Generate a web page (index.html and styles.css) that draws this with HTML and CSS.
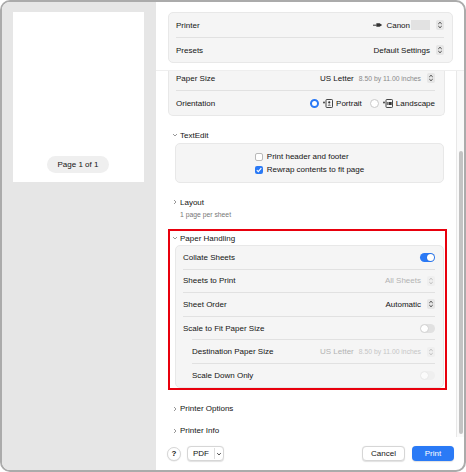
FILE: index.html
```html
<!DOCTYPE html>
<html lang="en">
<head>
  <meta charset="UTF-8">
  <meta name="viewport" content="width=device-width, initial-scale=1.0">
  <title>Print</title>
  <link rel="stylesheet" href="styles.css">
</head>
<body>
  <div class="window">
    <aside class="sidebar">
      <div class="preview">
        <span class="page-label">Page 1 of 1</span>
      </div>
    </aside>

    <main class="main">
      <div class="header">
        <div class="panel">
          <div class="row">
            <span>Printer</span>
            <span class="value">
              <svg class="printer-icon" width="10" height="6" viewBox="0 0 10 6"><path d="M0 3.2h3.6" stroke="#333" stroke-width="1"/><path d="M3.4 1.2h3.2l2.6 1.8-2.6 1.8H3.4z" fill="#333"/></svg>
              <span>Canon<span class="redacted"></span></span>
              <svg class="stepper" width="8" height="10" viewBox="0 0 8 10"><rect x="0" y="0" width="8" height="10" rx="2" fill="#e6e6e6"/><path d="M2.3 3.9L4 2.3l1.7 1.6M2.3 6.1L4 7.7l1.7-1.6" fill="none" stroke="#333" stroke-width="0.9"/></svg>
            </span>
          </div>
          <div class="row">
            <span>Presets</span>
            <span class="value">
              <span>Default Settings</span>
              <svg class="stepper" width="8" height="10" viewBox="0 0 8 10"><rect x="0" y="0" width="8" height="10" rx="2" fill="#e6e6e6"/><path d="M2.3 3.9L4 2.3l1.7 1.6M2.3 6.1L4 7.7l1.7-1.6" fill="none" stroke="#333" stroke-width="0.9"/></svg>
            </span>
          </div>
        </div>
      </div>

      <div class="scroll">
        <div class="content">
          <div class="panel cut">
            <div class="row">
              <span>Paper Size</span>
              <span class="value">
                <span>US Letter</span>
                <span class="hint">8.50 by 11.00 inches</span>
                <svg class="stepper" width="8" height="10" viewBox="0 0 8 10"><rect x="0" y="0" width="8" height="10" rx="2" fill="#e6e6e6"/><path d="M2.3 3.9L4 2.3l1.7 1.6M2.3 6.1L4 7.7l1.7-1.6" fill="none" stroke="#333" stroke-width="0.9"/></svg>
              </span>
            </div>
            <div class="row">
              <span>Orientation</span>
              <span class="value radios">
                <span class="radio on"></span>
                <svg width="10" height="9" viewBox="0 0 10 9"><circle cx="1" cy="3.5" r="0.9" fill="#333"/><rect x="3" y="0.5" width="6.5" height="8" rx="0.8" fill="none" stroke="#333" stroke-width="0.9"/><circle cx="6.25" cy="3.4" r="1.1" fill="#333"/><path d="M4.6 6.6q1.65-2 3.3 0z" fill="#333"/></svg>
                <span>Portrait</span>
                <span class="radio"></span>
                <svg width="10" height="9" viewBox="0 0 10 9"><circle cx="1" cy="3.5" r="0.9" fill="#333"/><rect x="3" y="0.5" width="6.5" height="8" rx="0.8" fill="none" stroke="#333" stroke-width="0.9"/><rect x="5.5" y="3" width="3.2" height="3" fill="#333"/><path d="M4.3 3v3" stroke="#333" stroke-width="0.8"/></svg>
                <span>Landscape</span>
              </span>
            </div>
          </div>

          <section class="group">
            <div class="disclosure">
              <svg width="6" height="6" viewBox="0 0 6 6"><path d="M1 2l2 2 2-2" fill="none" stroke="#8c8c8c" stroke-width="0.9"/></svg>
              <span>TextEdit</span>
            </div>
            <div class="panel inset checks">
              <div class="check-list">
                <label class="check"><span class="box"></span>Print header and footer</label>
                <label class="check"><span class="box on"><svg width="8" height="8" viewBox="0 0 8 8"><path d="M1.8 4.2l1.5 1.5 3-3.6" fill="none" stroke="#fff" stroke-width="1.1"/></svg></span>Rewrap contents to fit page</label>
              </div>
            </div>
          </section>

          <section class="group">
            <div class="disclosure">
              <svg width="6" height="6" viewBox="0 0 6 6"><path d="M2 1l2 2-2 2" fill="none" stroke="#8c8c8c" stroke-width="0.9"/></svg>
              <span>Layout</span>
            </div>
            <div class="sub">1 page per sheet</div>
          </section>

          <section class="group highlight">
            <div class="disclosure">
              <svg width="6" height="6" viewBox="0 0 6 6"><path d="M1 2l2 2 2-2" fill="none" stroke="#8c8c8c" stroke-width="0.9"/></svg>
              <span>Paper Handling</span>
            </div>
            <div class="panel inset list">
              <div class="row">
                <span>Collate Sheets</span>
                <span class="toggle on"><span class="knob"></span></span>
              </div>
              <div class="row">
                <span>Sheets to Print</span>
                <span class="value">
                  <span class="muted">All Sheets</span>
                  <svg class="stepper" width="8" height="10" viewBox="0 0 8 10"><rect x="0" y="0" width="8" height="10" rx="2" fill="#efefef"/><path d="M2.3 3.9L4 2.3l1.7 1.6M2.3 6.1L4 7.7l1.7-1.6" fill="none" stroke="#b5b5b5" stroke-width="0.9"/></svg>
                </span>
              </div>
              <div class="row">
                <span>Sheet Order</span>
                <span class="value">
                  <span>Automatic</span>
                  <svg class="stepper" width="8" height="10" viewBox="0 0 8 10"><rect x="0" y="0" width="8" height="10" rx="2" fill="#e6e6e6"/><path d="M2.3 3.9L4 2.3l1.7 1.6M2.3 6.1L4 7.7l1.7-1.6" fill="none" stroke="#333" stroke-width="0.9"/></svg>
                </span>
              </div>
              <div class="row">
                <span>Scale to Fit Paper Size</span>
                <span class="toggle"><span class="knob"></span></span>
              </div>
              <div class="row indent">
                <span>Destination Paper Size</span>
                <span class="value">
                  <span class="muted">US Letter</span>
                  <span class="hint muted-hint">8.50 by 11.00 inches</span>
                  <svg class="stepper" width="8" height="10" viewBox="0 0 8 10"><rect x="0" y="0" width="8" height="10" rx="2" fill="#efefef"/><path d="M2.3 3.9L4 2.3l1.7 1.6M2.3 6.1L4 7.7l1.7-1.6" fill="none" stroke="#b5b5b5" stroke-width="0.9"/></svg>
                </span>
              </div>
              <div class="row indent">
                <span>Scale Down Only</span>
                <span class="toggle disabled"><span class="knob"></span></span>
              </div>
            </div>
          </section>

          <section class="group after-highlight">
            <div class="disclosure">
              <svg width="6" height="6" viewBox="0 0 6 6"><path d="M2 1l2 2-2 2" fill="none" stroke="#8c8c8c" stroke-width="0.9"/></svg>
              <span>Printer Options</span>
            </div>
          </section>

          <section class="group tight">
            <div class="disclosure">
              <svg width="6" height="6" viewBox="0 0 6 6"><path d="M2 1l2 2-2 2" fill="none" stroke="#8c8c8c" stroke-width="0.9"/></svg>
              <span>Printer Info</span>
            </div>
          </section>
        </div>

        <div class="scrollbar"><div class="thumb"></div></div>
      </div>

      <footer class="footer">
        <button class="btn help">?</button>
        <button class="btn pdf">
          <span class="pdf-label">PDF</span>
          <span class="pdf-arrow"><svg width="6" height="6" viewBox="0 0 6 6"><path d="M1.2 2.2L3 3.9l1.8-1.7" fill="none" stroke="#333" stroke-width="0.9"/></svg></span>
        </button>
        <span class="spacer"></span>
        <button class="btn cancel">Cancel</button>
        <button class="btn primary">Print</button>
      </footer>
    </main>
  </div>
</body>
</html>
```

FILE: styles.css
```css
body {
  margin: 0;
  background: #fff;
  font-family: "Liberation Sans", Arial, sans-serif;
  font-size: 8px;
  color: #141414;
}
.window {
  width: 466px;
  height: 472px;
  box-sizing: border-box;
  border: 2px solid #ababab;
  border-radius: 10px;
  overflow: hidden;
  display: flex;
  background: #fff;
}

/* preview column */
.sidebar {
  width: 154px;
  flex: none;
  box-sizing: border-box;
  background: #e6e6e6;
  padding: 10px 0 0 10.5px;
}
.preview {
  width: 131px;
  height: 170px;
  box-sizing: border-box;
  background: #fff;
  display: flex;
  flex-direction: column;
  justify-content: flex-end;
  align-items: center;
  padding-bottom: 9px;
}
.page-label {
  background: #efefef;
  border-radius: 9px;
  height: 17px;
  line-height: 17px;
  padding: 0 10.5px;
}

/* settings column */
.main {
  flex: 1;
  min-width: 0;
  display: flex;
  flex-direction: column;
}
.header {
  padding: 10px 11px 7px 12px;
  border-bottom: 1px solid #eeeeee;
}
.panel {
  background: #f5f5f5;
  border: 1px solid #e8e8e8;
  border-radius: 5px;
  padding: 0 8px 0 7px;
}
.panel.cut {
  border-top: none;
  border-radius: 0 0 5px 5px;
  padding-right: 9px;
}
.row {
  display: flex;
  align-items: center;
  justify-content: space-between;
  height: 24px;
}
.row + .row {
  border-top: 1px solid #e1e1e1;
}
.value {
  display: flex;
  align-items: center;
  gap: 5px;
}
.stepper {
  display: block;
  margin-left: 1px;
}
.printer-icon {
  display: block;
  margin-right: -2px;
}
.redacted {
  display: inline-block;
  width: 19px;
  height: 10px;
  margin-left: 1px;
  vertical-align: -2px;
  background: #e2e2e2;
}
.hint {
  font-size: 6.8px;
  color: #8a8a8a;
}
.muted {
  color: #b3b3b3;
}
.muted-hint {
  color: #c6c6c6;
}

.radios {
  gap: 4px;
}
.radio {
  width: 9px;
  height: 9px;
  box-sizing: border-box;
  border-radius: 50%;
  background: #fff;
  border: 1px solid #c9c9c9;
  margin-left: 4px;
}
.radio.on {
  background: #fff;
  border: 2.8px solid #2a79f5;
}
.radios svg {
  display: block;
  margin-right: -1px;
}

/* scroll area */
.scroll {
  flex: 1;
  min-height: 0;
  display: flex;
  overflow: hidden;
}
.content {
  flex: 1;
  margin-top: -5px;
  padding: 0 11px 0 12px;
}
.scrollbar {
  width: 7px;
  flex: none;
  border-left: 1px solid #e8e8e8;
  background: #fafafa;
  padding-top: 80px;
}
.thumb {
  width: 4px;
  height: 283px;
  margin-left: 2px;
  border-radius: 3px;
  background: #c3c3c3;
}

.group {
  margin-top: 12px;
}
.group.after-highlight {
  margin-top: 14px;
}
.group.tight {
  margin-top: 8px;
}
.disclosure {
  height: 14px;
  display: flex;
  align-items: center;
  gap: 2px;
  padding-left: 4px;
}
.sub {
  padding: 1px 0 0 12px;
  margin-bottom: -1px;
  font-size: 6.8px;
  line-height: 10px;
  color: #777;
}
.panel.inset {
  margin: 1px 1px 0 7px;
}
.panel.inset.list {
  margin-top: 0;
}
.checks {
  display: flex;
  justify-content: center;
  padding: 6px 0;
}
.check-list {
  display: flex;
  flex-direction: column;
}
.check {
  display: flex;
  align-items: center;
  gap: 4px;
  height: 13px;
}
.box {
  width: 8px;
  height: 8px;
  box-sizing: border-box;
  border: 1px solid #b9b9b9;
  border-radius: 2px;
  background: #fff;
}
.box.on {
  border: none;
  background: #2a79f5;
}
.box svg {
  display: block;
}

.list .row {
  height: 22.6px;
}
.row.indent {
  margin-left: 9px;
}
.toggle {
  width: 15px;
  height: 9px;
  box-sizing: border-box;
  padding: 1px;
  border-radius: 5px;
  background: #e1e1e1;
  display: flex;
  align-items: center;
}
.toggle.on {
  background: #2a79f5;
  justify-content: flex-end;
}
.toggle.disabled {
  background: #efefef;
}
.knob {
  width: 7px;
  height: 7px;
  border-radius: 50%;
  background: #fff;
  box-shadow: 0 0 1px rgba(0, 0, 0, 0.35);
}
.toggle.disabled .knob {
  background: #fbfbfb;
  box-shadow: 0 0 1px rgba(0, 0, 0, 0.15);
}

/* red annotation around Paper Handling */
.highlight {
  position: relative;
}
.highlight::after {
  content: "";
  position: absolute;
  left: 0;
  right: -2px;
  top: -2px;
  bottom: -2px;
  border: 2px solid #e8000d;
  pointer-events: none;
}

/* buttons */
.footer {
  height: 33px;
  flex: none;
  display: flex;
  align-items: center;
  padding: 0 10px 0 11px;
}
.spacer {
  flex: 1;
}
.btn {
  height: 15px;
  box-sizing: border-box;
  border: 1px solid #d6d6d6;
  border-radius: 4px;
  background: #fff;
  box-shadow: 0 0.5px 1px rgba(0, 0, 0, 0.12);
  font-family: inherit;
  font-size: 8px;
  color: #141414;
  padding: 0;
  display: flex;
  align-items: center;
  justify-content: center;
}
.btn.help {
  width: 14px;
  height: 14px;
  border-radius: 50%;
  font-weight: bold;
}
.btn.pdf {
  width: 37px;
  margin-left: 6px;
  justify-content: flex-start;
}
.pdf-label {
  width: 27px;
  box-sizing: border-box;
  padding-left: 5px;
  border-right: 1px solid #dedede;
  line-height: 11px;
  text-align: left;
}
.pdf-arrow {
  flex: 1;
  display: flex;
  justify-content: center;
}
.pdf-arrow svg {
  display: block;
}
.btn.cancel {
  width: 43px;
}
.btn.primary {
  width: 42px;
  margin-left: 7px;
  border: none;
  background: #2a7af6;
  color: #fff;
}
```
